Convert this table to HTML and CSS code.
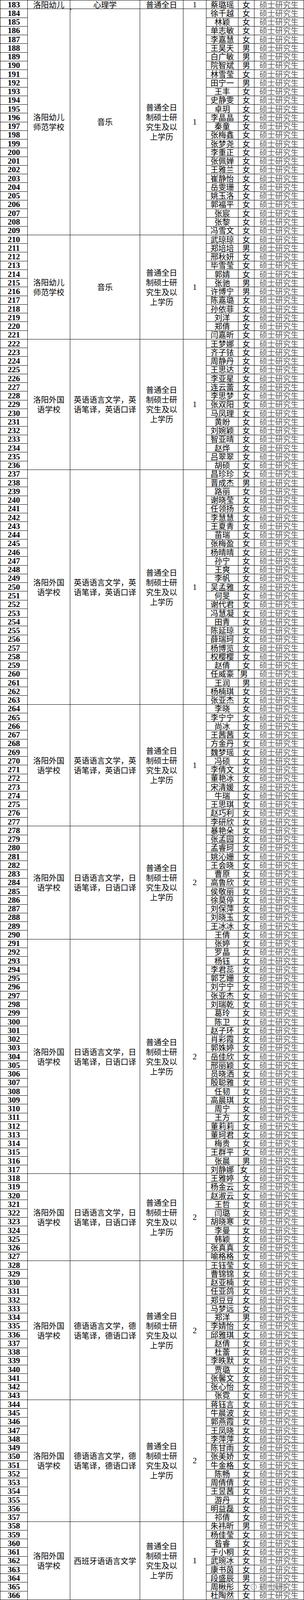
FILE: index.html
```html
<!DOCTYPE html>
<html lang="zh-CN">
<head>
<meta charset="utf-8">
<title>拟聘用人员名单</title>
<link rel="stylesheet" href="styles.css">
</head>
<body>
<div class="sheet">
<div class="c n">183</div><div class="c sc">洛阳幼儿</div><div class="c sj">心理学</div><div class="c ty">普通全日</div><div class="c ct">1</div><div class="c nm">蔡璐瑶</div><div class="c g">女</div><div class="c e">硕士研究生</div>

<div class="c n">184</div><div class="c sc span26"><span class="w4">洛阳幼儿师范学校</span></div><div class="c sj span26 flag">音乐</div><div class="c ty span26"><span class="w4">普通全日制硕士研究生及以上学历</span></div><div class="c ct span26">1</div><div class="c nm">徐千越</div><div class="c g">女</div><div class="c e">硕士研究生</div>
<div class="c n">185</div><div class="c nm">林颖</div><div class="c g">女</div><div class="c e">硕士研究生</div>
<div class="c n">186</div><div class="c nm">单志敏</div><div class="c g">女</div><div class="c e">硕士研究生</div>
<div class="c n">187</div><div class="c nm">李嘉慧</div><div class="c g">女</div><div class="c e">硕士研究生</div>
<div class="c n">188</div><div class="c nm">王昊天</div><div class="c g">男</div><div class="c e">硕士研究生</div>
<div class="c n">189</div><div class="c nm">白广敏</div><div class="c g">男</div><div class="c e">硕士研究生</div>
<div class="c n">190</div><div class="c nm">院智斌</div><div class="c g">男</div><div class="c e">硕士研究生</div>
<div class="c n">191</div><div class="c nm">林雪莹</div><div class="c g">女</div><div class="c e">硕士研究生</div>
<div class="c n">192</div><div class="c nm">田宁一</div><div class="c g">男</div><div class="c e">硕士研究生</div>
<div class="c n">193</div><div class="c nm">王丰</div><div class="c g">女</div><div class="c e">硕士研究生</div>
<div class="c n">194</div><div class="c nm">史静雯</div><div class="c g">女</div><div class="c e">硕士研究生</div>
<div class="c n">195</div><div class="c nm">卓玥</div><div class="c g">女</div><div class="c e">硕士研究生</div>
<div class="c n">196</div><div class="c nm">李晶晶</div><div class="c g">女</div><div class="c e">硕士研究生</div>
<div class="c n">197</div><div class="c nm">秦童</div><div class="c g">女</div><div class="c e">硕士研究生</div>
<div class="c n">198</div><div class="c nm">张梅鑫</div><div class="c g">女</div><div class="c e">硕士研究生</div>
<div class="c n">199</div><div class="c nm">张梦尧</div><div class="c g">女</div><div class="c e">硕士研究生</div>
<div class="c n">200</div><div class="c nm">李重正</div><div class="c g">女</div><div class="c e">硕士研究生</div>
<div class="c n">201</div><div class="c nm">张佩婵</div><div class="c g">女</div><div class="c e">硕士研究生</div>
<div class="c n">202</div><div class="c nm">王雅兰</div><div class="c g">女</div><div class="c e">硕士研究生</div>
<div class="c n">203</div><div class="c nm">崔静怡</div><div class="c g">女</div><div class="c e">硕士研究生</div>
<div class="c n">204</div><div class="c nm">岳雯珊</div><div class="c g">女</div><div class="c e">硕士研究生</div>
<div class="c n">205</div><div class="c nm">姚玉洛</div><div class="c g">女</div><div class="c e">硕士研究生</div>
<div class="c n">206</div><div class="c nm">郭福平</div><div class="c g">女</div><div class="c e">硕士研究生</div>
<div class="c n">207</div><div class="c nm">张宸</div><div class="c g">女</div><div class="c e">硕士研究生</div>
<div class="c n">208</div><div class="c nm">张黎</div><div class="c g">女</div><div class="c e">硕士研究生</div>
<div class="c n">209</div><div class="c nm">冯雪文</div><div class="c g">女</div><div class="c e">硕士研究生</div>

<div class="c n">210</div><div class="c sc span12"><span class="w4">洛阳幼儿师范学校</span></div><div class="c sj span12">音乐</div><div class="c ty span12"><span class="w4">普通全日制硕士研究生及以上学历</span></div><div class="c ct span12">1</div><div class="c nm">武琼琼</div><div class="c g">女</div><div class="c e">硕士研究生</div>
<div class="c n">211</div><div class="c nm">郑培培</div><div class="c g">男</div><div class="c e">硕士研究生</div>
<div class="c n">212</div><div class="c nm">邢秋妍</div><div class="c g">女</div><div class="c e">硕士研究生</div>
<div class="c n">213</div><div class="c nm">毕雪莹</div><div class="c g">女</div><div class="c e">硕士研究生</div>
<div class="c n">214</div><div class="c nm">郭婧</div><div class="c g">女</div><div class="c e">硕士研究生</div>
<div class="c n">215</div><div class="c nm">张驰</div><div class="c g">男</div><div class="c e">硕士研究生</div>
<div class="c n">216</div><div class="c nm">许博宁</div><div class="c g">男</div><div class="c e">硕士研究生</div>
<div class="c n">217</div><div class="c nm">陈嘉璐</div><div class="c g">女</div><div class="c e">硕士研究生</div>
<div class="c n">218</div><div class="c nm">孙依菲</div><div class="c g">女</div><div class="c e">硕士研究生</div>
<div class="c n">219</div><div class="c nm">刘洋</div><div class="c g">女</div><div class="c e">硕士研究生</div>
<div class="c n">220</div><div class="c nm">郑倩</div><div class="c g">女</div><div class="c e">硕士研究生</div>
<div class="c n">221</div><div class="c nm">闫嘉昕</div><div class="c g">女</div><div class="c e">硕士研究生</div>

<div class="c n">222</div><div class="c sc span15"><span class="w4">洛阳外国语学校</span></div><div class="c sj span15"><span class="w8">英语语言文学，英语笔译，英语口译</span></div><div class="c ty span15"><span class="w4">普通全日制硕士研究生及以上学历</span></div><div class="c ct span15">1</div><div class="c nm">王梦娜</div><div class="c g">女</div><div class="c e">硕士研究生</div>
<div class="c n">223</div><div class="c nm">齐子铱</div><div class="c g">女</div><div class="c e">硕士研究生</div>
<div class="c n">224</div><div class="c nm">周静丹</div><div class="c g">女</div><div class="c e">硕士研究生</div>
<div class="c n">225</div><div class="c nm">王思达</div><div class="c g">女</div><div class="c e">硕士研究生</div>
<div class="c n">226</div><div class="c nm">李亚星</div><div class="c g">女</div><div class="c e">硕士研究生</div>
<div class="c n">227</div><div class="c nm">连云蕾</div><div class="c g">女</div><div class="c e">硕士研究生</div>
<div class="c n">228</div><div class="c nm">李思梦</div><div class="c g">女</div><div class="c e">硕士研究生</div>
<div class="c n">229</div><div class="c nm">张双阳</div><div class="c g">女</div><div class="c e">硕士研究生</div>
<div class="c n">230</div><div class="c nm">马凤理</div><div class="c g">女</div><div class="c e">硕士研究生</div>
<div class="c n">231</div><div class="c nm">黄盼</div><div class="c g">女</div><div class="c e">硕士研究生</div>
<div class="c n">232</div><div class="c nm">刘婉颖</div><div class="c g">女</div><div class="c e">硕士研究生</div>
<div class="c n">233</div><div class="c nm">智亚晴</div><div class="c g">女</div><div class="c e">硕士研究生</div>
<div class="c n">234</div><div class="c nm">赵烨</div><div class="c g">女</div><div class="c e">硕士研究生</div>
<div class="c n">235</div><div class="c nm">吕翠翠</div><div class="c g">女</div><div class="c e">硕士研究生</div>
<div class="c n">236</div><div class="c nm">胡硕</div><div class="c g">女</div><div class="c e">硕士研究生</div>

<div class="c n">237</div><div class="c sc span27"><span class="w4">洛阳外国语学校</span></div><div class="c sj span27"><span class="w8">英语语言文学，英语笔译，英语口译</span></div><div class="c ty span27"><span class="w4">普通全日制硕士研究生及以上学历</span></div><div class="c ct span27">1</div><div class="c nm">昌珍珍</div><div class="c g">女</div><div class="c e">硕士研究生</div>
<div class="c n">238</div><div class="c nm">晋成杰</div><div class="c g">男</div><div class="c e">硕士研究生</div>
<div class="c n">239</div><div class="c nm">路丽</div><div class="c g">女</div><div class="c e">硕士研究生</div>
<div class="c n">240</div><div class="c nm">谢晓莹</div><div class="c g">女</div><div class="c e">硕士研究生</div>
<div class="c n">241</div><div class="c nm">任领扬</div><div class="c g">女</div><div class="c e">硕士研究生</div>
<div class="c n">242</div><div class="c nm">李慧慧</div><div class="c g">女</div><div class="c e">硕士研究生</div>
<div class="c n">243</div><div class="c nm">王夏青</div><div class="c g">女</div><div class="c e">硕士研究生</div>
<div class="c n">244</div><div class="c nm">苗瑞</div><div class="c g">女</div><div class="c e">硕士研究生</div>
<div class="c n">245</div><div class="c nm">张梅盈</div><div class="c g">女</div><div class="c e">硕士研究生</div>
<div class="c n">246</div><div class="c nm">杨晴晴</div><div class="c g">女</div><div class="c e">硕士研究生</div>
<div class="c n">247</div><div class="c nm">孙宁</div><div class="c g">女</div><div class="c e">硕士研究生</div>
<div class="c n">248</div><div class="c nm">王爽</div><div class="c g">女</div><div class="c e">硕士研究生</div>
<div class="c n">249</div><div class="c nm">李帆</div><div class="c g">女</div><div class="c e">硕士研究生</div>
<div class="c n">250</div><div class="c nm">吴孟雅</div><div class="c g">女</div><div class="c e">硕士研究生</div>
<div class="c n">251</div><div class="c nm">何旻</div><div class="c g">女</div><div class="c e">硕士研究生</div>
<div class="c n">252</div><div class="c nm">谢代君</div><div class="c g">女</div><div class="c e">硕士研究生</div>
<div class="c n">253</div><div class="c nm">冯慧凝</div><div class="c g">女</div><div class="c e">硕士研究生</div>
<div class="c n">254</div><div class="c nm">田青</div><div class="c g">女</div><div class="c e">硕士研究生</div>
<div class="c n">255</div><div class="c nm">陈延琼</div><div class="c g">女</div><div class="c e">硕士研究生</div>
<div class="c n">256</div><div class="c nm">薛瑞珂</div><div class="c g">女</div><div class="c e">硕士研究生</div>
<div class="c n">257</div><div class="c nm">杨博览</div><div class="c g">女</div><div class="c e">硕士研究生</div>
<div class="c n">258</div><div class="c nm">权樱樱</div><div class="c g">女</div><div class="c e">硕士研究生</div>
<div class="c n">259</div><div class="c nm">赵倩</div><div class="c g">女</div><div class="c e">硕士研究生</div>
<div class="c n">260</div><div class="c nm">任威豪</div><div class="c g left flag">男</div><div class="c e">硕士研究生</div>
<div class="c n">261</div><div class="c nm">王润</div><div class="c g">男</div><div class="c e">硕士研究生</div>
<div class="c n">262</div><div class="c nm">杨楠琪</div><div class="c g">女</div><div class="c e">硕士研究生</div>
<div class="c n">263</div><div class="c nm">张亚杰</div><div class="c g">女</div><div class="c e">硕士研究生</div>

<div class="c n">264</div><div class="c sc span14"><span class="w4">洛阳外国语学校</span></div><div class="c sj span14"><span class="w8">英语语言文学，英语笔译，英语口译</span></div><div class="c ty span14"><span class="w4">普通全日制硕士研究生及以上学历</span></div><div class="c ct span14">1</div><div class="c nm">李晓</div><div class="c g">女</div><div class="c e">硕士研究生</div>
<div class="c n">265</div><div class="c nm">李宁宁</div><div class="c g">女</div><div class="c e">硕士研究生</div>
<div class="c n">266</div><div class="c nm">尚冰</div><div class="c g">女</div><div class="c e">硕士研究生</div>
<div class="c n">267</div><div class="c nm">王茜茜</div><div class="c g">女</div><div class="c e">硕士研究生</div>
<div class="c n">268</div><div class="c nm">方金丹</div><div class="c g">女</div><div class="c e">硕士研究生</div>
<div class="c n">269</div><div class="c nm">魏梦瑶</div><div class="c g">女</div><div class="c e">硕士研究生</div>
<div class="c n">270</div><div class="c nm">冯硕</div><div class="c g">女</div><div class="c e">硕士研究生</div>
<div class="c n">271</div><div class="c nm">李倩文</div><div class="c g">女</div><div class="c e">硕士研究生</div>
<div class="c n">272</div><div class="c nm">董艳冰</div><div class="c g">女</div><div class="c e">硕士研究生</div>
<div class="c n">273</div><div class="c nm">宋清媛</div><div class="c g">女</div><div class="c e">硕士研究生</div>
<div class="c n">274</div><div class="c nm">牛瑞</div><div class="c g">女</div><div class="c e">硕士研究生</div>
<div class="c n">275</div><div class="c nm">王思琪</div><div class="c g">女</div><div class="c e">硕士研究生</div>
<div class="c n">276</div><div class="c nm">赵巧利</div><div class="c g">女</div><div class="c e">硕士研究生</div>
<div class="c n">277</div><div class="c nm">李研欣</div><div class="c g">女</div><div class="c e">硕士研究生</div>

<div class="c n">278</div><div class="c sc span13"><span class="w4">洛阳外国语学校</span></div><div class="c sj span13"><span class="w8">日语语言文学，日语笔译，日语口译</span></div><div class="c ty span13"><span class="w4">普通全日制硕士研究生及以上学历</span></div><div class="c ct span13">2</div><div class="c nm">暴艳朵</div><div class="c g">女</div><div class="c e">硕士研究生</div>
<div class="c n">279</div><div class="c nm">张孟园</div><div class="c g">女</div><div class="c e">硕士研究生</div>
<div class="c n">280</div><div class="c nm">孟睿珂</div><div class="c g">女</div><div class="c e">硕士研究生</div>
<div class="c n">281</div><div class="c nm">姚沁姗</div><div class="c g">女</div><div class="c e">硕士研究生</div>
<div class="c n">282</div><div class="c nm">王会晓</div><div class="c g">女</div><div class="c e">硕士研究生</div>
<div class="c n">283</div><div class="c nm">曹原</div><div class="c g">女</div><div class="c e">硕士研究生</div>
<div class="c n">284</div><div class="c nm">高鲁欣</div><div class="c g">女</div><div class="c e">硕士研究生</div>
<div class="c n">285</div><div class="c nm">侯敬丽</div><div class="c g">女</div><div class="c e">硕士研究生</div>
<div class="c n">286</div><div class="c nm">徐莫停</div><div class="c g">女</div><div class="c e">硕士研究生</div>
<div class="c n">287</div><div class="c nm">刘保萍</div><div class="c g">女</div><div class="c e">硕士研究生</div>
<div class="c n">288</div><div class="c nm">刘晓玉</div><div class="c g">女</div><div class="c e">硕士研究生</div>
<div class="c n">289</div><div class="c nm">王冰冰</div><div class="c g">女</div><div class="c e">硕士研究生</div>
<div class="c n">290</div><div class="c nm">王倩</div><div class="c g">女</div><div class="c e">硕士研究生</div>

<div class="c n">291</div><div class="c sc span27"><span class="w4">洛阳外国语学校</span></div><div class="c sj span27"><span class="w8">日语语言文学，日语笔译，日语口译</span></div><div class="c ty span27"><span class="w4">普通全日制硕士研究生及以上学历</span></div><div class="c ct span27">2</div><div class="c nm">张婷</div><div class="c g">女</div><div class="c e">硕士研究生</div>
<div class="c n">292</div><div class="c nm">罗晶</div><div class="c g">女</div><div class="c e">硕士研究生</div>
<div class="c n">293</div><div class="c nm">杨钰</div><div class="c g">女</div><div class="c e">硕士研究生</div>
<div class="c n">294</div><div class="c nm">李君蕊</div><div class="c g">女</div><div class="c e">硕士研究生</div>
<div class="c n">295</div><div class="c nm">郭艺姗</div><div class="c g">女</div><div class="c e">硕士研究生</div>
<div class="c n">296</div><div class="c nm">刘宁宁</div><div class="c g">女</div><div class="c e">硕士研究生</div>
<div class="c n">297</div><div class="c nm">张亚杰</div><div class="c g">女</div><div class="c e">硕士研究生</div>
<div class="c n">298</div><div class="c nm">刘瑞乾</div><div class="c g">女</div><div class="c e">硕士研究生</div>
<div class="c n">299</div><div class="c nm">葛玲</div><div class="c g">女</div><div class="c e">硕士研究生</div>
<div class="c n">300</div><div class="c nm">陈卫</div><div class="c g">女</div><div class="c e">硕士研究生</div>
<div class="c n">301</div><div class="c nm">赵子环</div><div class="c g">女</div><div class="c e">硕士研究生</div>
<div class="c n">302</div><div class="c nm">肖彩霞</div><div class="c g">女</div><div class="c e">硕士研究生</div>
<div class="c n">303</div><div class="c nm">郭姝婷</div><div class="c g">女</div><div class="c e">硕士研究生</div>
<div class="c n">304</div><div class="c nm">岳佳欣</div><div class="c g">女</div><div class="c e">硕士研究生</div>
<div class="c n">305</div><div class="c nm">邢丽颖</div><div class="c g">女</div><div class="c e">硕士研究生</div>
<div class="c n">306</div><div class="c nm">员晓洒</div><div class="c g">女</div><div class="c e">硕士研究生</div>
<div class="c n">307</div><div class="c nm">殷聪雅</div><div class="c g">女</div><div class="c e">硕士研究生</div>
<div class="c n">308</div><div class="c nm">任韧</div><div class="c g">女</div><div class="c e">硕士研究生</div>
<div class="c n">309</div><div class="c nm">高晨琪</div><div class="c g">女</div><div class="c e">硕士研究生</div>
<div class="c n">310</div><div class="c nm">周宁</div><div class="c g">女</div><div class="c e">硕士研究生</div>
<div class="c n">311</div><div class="c nm">王方</div><div class="c g">女</div><div class="c e">硕士研究生</div>
<div class="c n">312</div><div class="c nm">董莉莉</div><div class="c g">女</div><div class="c e">硕士研究生</div>
<div class="c n">313</div><div class="c nm">董珂君</div><div class="c g">女</div><div class="c e">硕士研究生</div>
<div class="c n">314</div><div class="c nm">梅贵</div><div class="c g">女</div><div class="c e">硕士研究生</div>
<div class="c n">315</div><div class="c nm">王群平</div><div class="c g">女</div><div class="c e">硕士研究生</div>
<div class="c n">316</div><div class="c nm">张晨</div><div class="c g">男</div><div class="c e">硕士研究生</div>
<div class="c n">317</div><div class="c nm">刘静娜</div><div class="c g left flag">女</div><div class="c e">硕士研究生</div>

<div class="c n">318</div><div class="c sc span10"><span class="w4">洛阳外国语学校</span></div><div class="c sj span10"><span class="w8">日语语言文学，日语笔译，日语口译</span></div><div class="c ty span10"><span class="w4">普通全日制硕士研究生及以上学历</span></div><div class="c ct span10">2</div><div class="c nm">王雅婷</div><div class="c g">女</div><div class="c e">硕士研究生</div>
<div class="c n">319</div><div class="c nm">杨金云</div><div class="c g">女</div><div class="c e">硕士研究生</div>
<div class="c n">320</div><div class="c nm">赵淑云</div><div class="c g">女</div><div class="c e">硕士研究生</div>
<div class="c n">321</div><div class="c nm">王哲</div><div class="c g">女</div><div class="c e">硕士研究生</div>
<div class="c n">322</div><div class="c nm">闫璐</div><div class="c g">女</div><div class="c e">硕士研究生</div>
<div class="c n">323</div><div class="c nm">胡晓寒</div><div class="c g">女</div><div class="c e">硕士研究生</div>
<div class="c n">324</div><div class="c nm">李曼</div><div class="c g">女</div><div class="c e">硕士研究生</div>
<div class="c n">325</div><div class="c nm">韩颖</div><div class="c g">女</div><div class="c e">硕士研究生</div>
<div class="c n">326</div><div class="c nm">张真真</div><div class="c g">女</div><div class="c e">硕士研究生</div>
<div class="c n">327</div><div class="c nm">喻格格</div><div class="c g">女</div><div class="c e">硕士研究生</div>

<div class="c n">328</div><div class="c sc span16"><span class="w4">洛阳外国语学校</span></div><div class="c sj span16"><span class="w8">德语语言文学，德语笔译，德语口译</span></div><div class="c ty span16"><span class="w4">普通全日制硕士研究生及以上学历</span></div><div class="c ct span16">2</div><div class="c nm">王钰莹</div><div class="c g">女</div><div class="c e">硕士研究生</div>
<div class="c n">329</div><div class="c nm">曹锦锦</div><div class="c g">女</div><div class="c e">硕士研究生</div>
<div class="c n">330</div><div class="c nm">赵亚楠</div><div class="c g">女</div><div class="c e">硕士研究生</div>
<div class="c n">331</div><div class="c nm">任亚鸽</div><div class="c g">女</div><div class="c e">硕士研究生</div>
<div class="c n">332</div><div class="c nm">郑豆豆</div><div class="c g">女</div><div class="c e">硕士研究生</div>
<div class="c n">333</div><div class="c nm">马梦远</div><div class="c g">女</div><div class="c e">硕士研究生</div>
<div class="c n">334</div><div class="c nm">郑洋</div><div class="c g">男</div><div class="c e">硕士研究生</div>
<div class="c n">335</div><div class="c nm">李婧怡</div><div class="c g">女</div><div class="c e">硕士研究生</div>
<div class="c n">336</div><div class="c nm">邱雅琪</div><div class="c g">女</div><div class="c e">硕士研究生</div>
<div class="c n">337</div><div class="c nm">赵倩</div><div class="c g">女</div><div class="c e">硕士研究生</div>
<div class="c n">338</div><div class="c nm">杜蕾</div><div class="c g">女</div><div class="c e">硕士研究生</div>
<div class="c n">339</div><div class="c nm">李昳默</div><div class="c g">女</div><div class="c e">硕士研究生</div>
<div class="c n">340</div><div class="c nm">贾璐</div><div class="c g">女</div><div class="c e">硕士研究生</div>
<div class="c n">341</div><div class="c nm">张馨文</div><div class="c g">女</div><div class="c e">硕士研究生</div>
<div class="c n">342</div><div class="c nm">张心怡</div><div class="c g">女</div><div class="c e">硕士研究生</div>
<div class="c n">343</div><div class="c nm">张霓</div><div class="c g">女</div><div class="c e">硕士研究生</div>

<div class="c n">344</div><div class="c sc span14"><span class="w4">洛阳外国语学校</span></div><div class="c sj span14"><span class="w8">德语语言文学，德语笔译，德语口译</span></div><div class="c ty span14"><span class="w4">普通全日制硕士研究生及以上学历</span></div><div class="c ct span14">2</div><div class="c nm">蒋钰言</div><div class="c g">女</div><div class="c e">硕士研究生</div>
<div class="c n">345</div><div class="c nm">牛晨波</div><div class="c g">女</div><div class="c e">硕士研究生</div>
<div class="c n">346</div><div class="c nm">郭燕霞</div><div class="c g">女</div><div class="c e">硕士研究生</div>
<div class="c n">347</div><div class="c nm">王凤晓</div><div class="c g">女</div><div class="c e">硕士研究生</div>
<div class="c n">348</div><div class="c nm">李萍萍</div><div class="c g">女</div><div class="c e">硕士研究生</div>
<div class="c n">349</div><div class="c nm">陈甘雨</div><div class="c g">女</div><div class="c e">硕士研究生</div>
<div class="c n">350</div><div class="c nm">张美娇</div><div class="c g">女</div><div class="c e">硕士研究生</div>
<div class="c n">351</div><div class="c nm">牛金格</div><div class="c g">女</div><div class="c e">硕士研究生</div>
<div class="c n">352</div><div class="c nm">陈畅</div><div class="c g">女</div><div class="c e">硕士研究生</div>
<div class="c n">353</div><div class="c nm">周倩倩</div><div class="c g">女</div><div class="c e">硕士研究生</div>
<div class="c n">354</div><div class="c nm">王昱茜</div><div class="c g">女</div><div class="c e">硕士研究生</div>
<div class="c n">355</div><div class="c nm">游丹</div><div class="c g">女</div><div class="c e">硕士研究生</div>
<div class="c n">356</div><div class="c nm">明益磊</div><div class="c g">女</div><div class="c e">硕士研究生</div>
<div class="c n">357</div><div class="c nm">祁倩</div><div class="c g">女</div><div class="c e">硕士研究生</div>

<div class="c n">358</div><div class="c sc span9"><span class="w4">洛阳外国语学校</span></div><div class="c sj span9"><span class="w8">西班牙语语言文学</span></div><div class="c ty span9"><span class="w4">普通全日制硕士研究生及以上学历</span></div><div class="c ct span9">1</div><div class="c nm">朱祎昕</div><div class="c g">男</div><div class="c e">硕士研究生</div>
<div class="c n">359</div><div class="c nm">杨佳莹</div><div class="c g">女</div><div class="c e">硕士研究生</div>
<div class="c n">360</div><div class="c nm">昝睿</div><div class="c g">女</div><div class="c e">硕士研究生</div>
<div class="c n">361</div><div class="c nm">于小桐</div><div class="c g">女</div><div class="c e">硕士研究生</div>
<div class="c n">362</div><div class="c nm">武琬冰</div><div class="c g">女</div><div class="c e">硕士研究生</div>
<div class="c n">363</div><div class="c nm">康书茵</div><div class="c g">女</div><div class="c e">硕士研究生</div>
<div class="c n">364</div><div class="c nm">段盛辰</div><div class="c g">男</div><div class="c e">硕士研究生</div>
<div class="c n">365</div><div class="c nm">周楸彤</div><div class="c g">女</div><div class="c e">硕士研究生<span class="mark"><svg class="mark-icon" viewBox="0 0 20 20" width="18" height="18"><circle cx="10" cy="10" r="8" fill="none" stroke="#9a9a9a" stroke-width="1.6"/><circle cx="7.5" cy="9" r="1.2" fill="#9a9a9a"/><circle cx="12.5" cy="9" r="1.2" fill="#9a9a9a"/></svg><span>王伟教育</span></span></div>
<div class="c n">366</div><div class="c nm">杜陶然</div><div class="c g">女</div><div class="c e">硕士研究生</div>
</div>
</body>
</html>
```
FILE: styles.css
```css
html, body {
  margin: 0;
  padding: 0;
  background: #fff;
}

body {
  font-family: "Noto Sans CJK SC", "Noto Sans", sans-serif;
  color: #000;
}

/* The sheet fills the window height; its 184 rows share it evenly
   (24px per row in a 4417px-tall window). */
.sheet {
  box-sizing: border-box;
  display: grid;
  grid-template-columns: 69px 108px 178px 110px 58px 81px 40px 126px;
  grid-template-rows: repeat(184, minmax(0, 1fr));
  gap: 1px;
  width: 779px;
  height: 100vh;
  background: #000;
  border: 1px solid #000;
}

.c {
  position: relative;
  display: flex;
  align-items: center;
  justify-content: center;
  min-height: 0;
  min-width: 0;
  background: #fff;
  font-size: 20px;
  line-height: 20px;
  text-align: center;
  white-space: nowrap;
}

.n {
  grid-column: 1;
  font-family: "Liberation Serif", serif;
  font-weight: bold;
  font-size: 21px;
}

.sc { grid-column: 2; }
.sj { grid-column: 3; }
.ty { grid-column: 4; }

.ct {
  grid-column: 5;
  font-family: "Liberation Serif", serif;
  font-size: 21px;
}

.nm { grid-column: 6; }
.g { grid-column: 7; }

.e {
  grid-column: 8;
  color: #5a5a5a;
}

.w4 {
  display: block;
  width: 80px;
  line-height: 25px;
  white-space: normal;
}

.w8 {
  display: block;
  width: 160px;
  line-height: 25px;
  white-space: normal;
}

.span9 { grid-row: span 9; }
.span10 { grid-row: span 10; }
.span12 { grid-row: span 12; }
.span13 { grid-row: span 13; }
.span14 { grid-row: span 14; }
.span15 { grid-row: span 15; }
.span16 { grid-row: span 16; }
.span26 { grid-row: span 26; }
.span27 { grid-row: span 27; }

.left {
  justify-content: flex-start;
  padding-left: 4px;
}

.flag::before {
  content: "";
  position: absolute;
  top: 0;
  left: 0;
  border-top: 4px solid #1a8a1a;
  border-right: 4px solid transparent;
}

/* watermark stamped over the last rows */
.mark {
  position: absolute;
  left: -11px;
  top: 1px;
  display: flex;
  align-items: center;
  gap: 2px;
  font-size: 18px;
  line-height: 20px;
  color: rgba(140, 140, 140, 0.75);
  pointer-events: none;
}

.mark-icon {
  flex: none;
}
```
